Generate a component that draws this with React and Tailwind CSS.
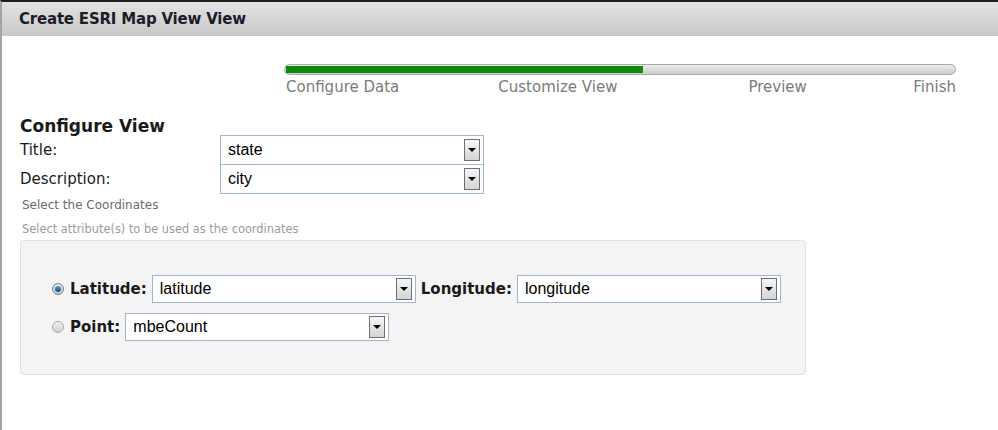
import React from "react";

const dv = { fontFamily: '"DejaVu Sans", Verdana, sans-serif' };
const ar = { fontFamily: '"Liberation Sans", Arial, sans-serif' };

function Select({ value, className = "" }) {
    return (
        <div
            className={`flex items-center justify-between bg-white border border-[#9fb7d3] pl-[7px] pr-[3px] text-[16px] text-black ${className}`}
            style={ar}
        >
            <span className="leading-none">{value}</span>
            <span className="flex h-[22px] w-[16px] items-center justify-center border border-[#6f6f6f] bg-gradient-to-b from-[#f7f7f7] to-[#d4d4d4]">
                <span className="h-0 w-0 border-x-[4px] border-t-[4px] border-x-transparent border-t-black" />
            </span>
        </div>
    );
}

function Radio({ checked }) {
    return (
        <span
            className={`flex h-[12px] w-[12px] items-center justify-center rounded-full border ${
                checked
                    ? "border-[#7d7d7d] bg-gradient-to-b from-[#e8e8e8] to-[#c9c9c9]"
                    : "border-[#a9a9a9] bg-gradient-to-b from-[#f2f2f2] to-[#cfcfcf]"
            }`}
        >
            {checked && (
                <span className="h-[6px] w-[6px] rounded-full bg-gradient-to-b from-[#4aa3df] to-[#0b4f86]" />
            )}
        </span>
    );
}

function Step({ label, className = "" }) {
    return (
        <span className={`text-[15px] leading-[18px] text-[#7b7b7b] ${className}`} style={dv}>
            {label}
        </span>
    );
}

export default function App() {
    return (
        <div className="h-[430px] w-[998px] overflow-hidden border-t-2 border-l-2 border-t-[#1e1e1e] border-l-[#a3a3a3] bg-white">
            {/* header */}
            <div className="flex h-[34px] items-center bg-gradient-to-b from-[#e3e3e3] to-[#c8c8c8] pl-[17px]">
                <h1 className="text-[15px] font-bold tracking-[-0.2px] text-[#1c1c28]" style={dv}>
                    Create ESRI Map View View
                </h1>
            </div>

            {/* wizard progress */}
            <div className="ml-[282px] mt-[28px] w-[672px]">
                <div className="flex h-[11px] items-center rounded-full border border-[#a9a9a9] bg-gradient-to-b from-[#ececec] to-[#cdcdcd] px-px">
                    <div className="h-[7px] w-[357px] bg-[#0b8a0b]" />
                </div>
                <div className="mt-[3px] flex pl-[2px]">
                    <Step label="Configure Data" />
                    <Step label="Customize View" className="ml-[99px]" />
                    <Step label="Preview" className="ml-[131px]" />
                    <Step label="Finish" className="ml-auto" />
                </div>
            </div>

            {/* form */}
            <div className="pl-[18px]">
                <h2 className="mt-[20px] text-[17px] font-bold leading-[20px] text-[#1a1a1a]" style={dv}>
                    Configure View
                </h2>
                <div className="-mt-px flex h-[30px] items-center">
                    <span className="w-[200px] text-[15px] text-[#1a1a1a]" style={dv}>
                        Title:
                    </span>
                    <Select value="state" className="h-[30px] w-[264px]" />
                </div>
                <div className="-mt-px flex h-[30px] items-center">
                    <span className="w-[200px] text-[15px] text-[#1a1a1a]" style={dv}>
                        Description:
                    </span>
                    <Select value="city" className="h-[30px] w-[264px]" />
                </div>
                <p className="ml-[2px] mt-[3px] text-[12px] leading-[16px] text-[#6b6b6b]" style={dv}>
                    Select the Coordinates
                </p>
                <p className="ml-[2px] mt-[9px] text-[11.4px] leading-[14px] text-[#9b9b9b]" style={dv}>
                    Select attribute(s) to be used as the coordinates
                </p>

                <div className="mt-[4px] flex w-[786px] flex-col gap-[10px] rounded-[4px] border border-[#e1e1e1] bg-[#f4f4f4] pb-[33px] pl-[31px] pt-[34px]">
                    <div className="flex h-[28px] items-center">
                        <Radio checked />
                        <span className="ml-[6px] text-[15px] font-bold text-[#1a1a1a]" style={dv}>
                            Latitude:
                        </span>
                        <Select value="latitude" className="ml-[5px] h-[28px] w-[264px]" />
                        <span className="ml-[5px] text-[15px] font-bold text-[#1a1a1a]" style={dv}>
                            Longitude:
                        </span>
                        <Select value="longitude" className="ml-[5px] h-[28px] w-[264px]" />
                    </div>
                    <div className="flex h-[28px] items-center">
                        <Radio />
                        <span className="ml-[6px] text-[15px] font-bold text-[#1a1a1a]" style={dv}>
                            Point:
                        </span>
                        <Select value="mbeCount" className="ml-[5px] h-[28px] w-[264px]" />
                    </div>
                </div>
            </div>
        </div>
    );
}
